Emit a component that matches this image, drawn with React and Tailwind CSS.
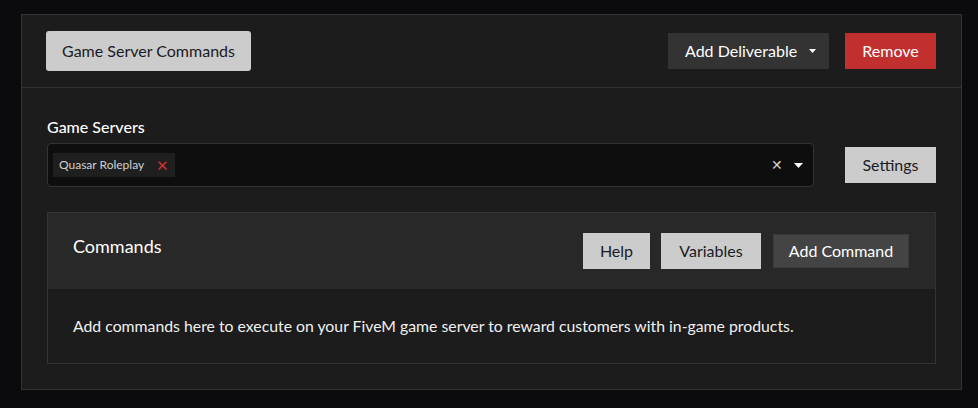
import React from "react";

function Caret({ className = "", w = 10, h = 6 }) {
  return (
    <svg width={w} height={h} viewBox="0 0 10 6" preserveAspectRatio="none" className={className}>
      <path d="M0 0 L10 0 L5 6 Z" fill="currentColor" />
    </svg>
  );
}

export default function App() {
  return (
    <div
      className="min-h-[408px] w-full bg-[#0b0b0d] pt-[14px] pl-[21px]"
      style={{ fontFamily: "Lato, 'Noto Sans', sans-serif" }}
    >
      <div className="w-[941px] border border-[#333333] bg-[#1c1c1c]">
        {/* Header */}
        <div className="flex items-center justify-between border-b border-[#333333] pl-6 pr-[25px] py-4">
          <button className="h-10 rounded-[3px] bg-[#cccccc] px-4 text-[16px] text-[#1b1b24]">
            Game Server Commands
          </button>
          <div className="flex items-center gap-4">
            <button className="flex h-9 w-[161px] items-center gap-[12px] bg-[#333333] pl-[17px] text-[16px] text-white">
              Add Deliverable
              <Caret className="text-white" w={7} h={4} />
            </button>
            <button className="h-9 w-[91px] bg-[#c22f2f] text-[16px] text-white">
              Remove
            </button>
          </div>
        </div>

        {/* Body */}
        <div className="pb-[25px] pl-[25px] pr-[25px] pt-[28px]">
          <div className="mb-[5px] text-[16px] font-medium leading-[22px] text-white">
            Game Servers
          </div>
          <div className="flex items-center gap-[31px]">
            <div className="flex h-11 flex-1 items-center rounded-[4px] border border-[#333333] bg-[#0e0e0e] pl-[5px] pr-[10px]">
              <div className="flex h-6 items-center gap-[12px] bg-[#1f1f1f] px-[6px] text-[12px] text-[#d0d0d0]">
                Quasar Roleplay
                <span className="text-[15px] leading-none text-[#d43030]">✕</span>
              </div>
              <div className="flex-1" />
              <span className="mr-[11px] text-[14px] leading-none text-[#cfcfcf]">✕</span>
              <Caret className="text-white" w={9} h={5} />
            </div>
            <button className="h-9 w-[91px] bg-[#cccccc] text-[16px] text-[#1b1b24]">
              Settings
            </button>
          </div>

          {/* Commands panel */}
          <div className="mt-[25px] border border-[#333333]">
            <div className="flex items-start justify-between bg-[#282828] py-5 pl-[25px] pr-[26px]">
              <div className="text-[18px] leading-[27px] text-white">Commands</div>
              <div className="flex items-center">
                <button className="h-9 w-[67px] bg-[#cccccc] text-[16px] text-[#1b1b24]">Help</button>
                <button className="ml-[11px] h-9 w-[100px] bg-[#cccccc] text-[16px] text-[#1b1b24]">Variables</button>
                <button className="ml-[12px] h-[34px] w-[136px] border border-[#3a3a3a] bg-[#444444] text-[16px] text-white">
                  Add Command
                </button>
              </div>
            </div>
            <div className="px-[25px] py-[25px] text-[15.8px] leading-6 text-[#f0f0f0]">
              Add commands here to execute on your FiveM game server to reward customers with in-game products.
            </div>
          </div>
        </div>
      </div>
    </div>
  );
}
